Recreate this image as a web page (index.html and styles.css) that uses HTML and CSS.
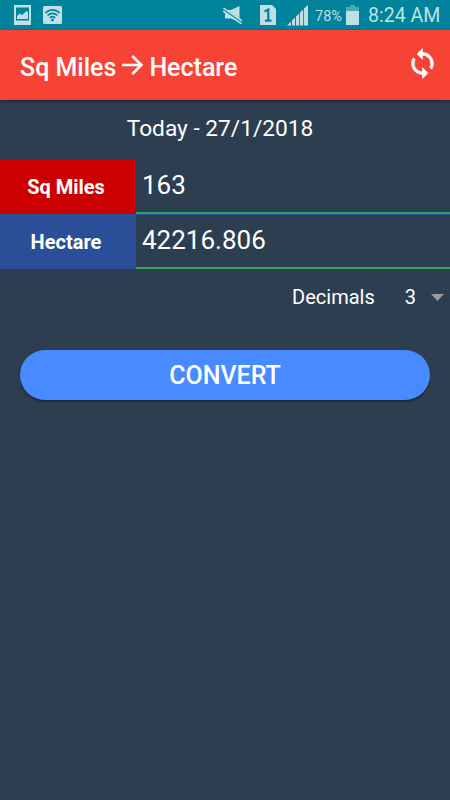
FILE: index.html
```
<!DOCTYPE html>
<html lang="en">
<head>
    <meta charset="UTF-8">
    <meta name="viewport" content="width=device-width, initial-scale=1.0">
    <title>Sq Miles to Hectare</title>
    <link rel="stylesheet" href="styles.css">
</head>
<body>
    <div class="status-bar">
        <svg class="icon-picture" width="17" height="20" viewBox="0 0 17 20">
            <path fill-rule="evenodd" d="M0 0h17v20H0zM2 2.500v13h13v-13z"/>
            <path d="M3 14V11l3-2.500 2 1.500 3-2.500 1-1.500 2 1V14z"/>
        </svg>
        <svg class="icon-wifi" width="19" height="18" viewBox="0 0 19 18">
            <rect width="19" height="18" rx="1.500"/>
            <g class="waves">
                <path d="M2.200 6.800Q9.500 1 16.800 6.800"/>
                <path d="M4.500 9.400Q9.500 5.200 14.500 9.400"/>
                <path d="M6.800 11.800Q9.500 9.400 12.200 11.800"/>
            </g>
            <circle class="dot" cx="9.500" cy="14" r="1.400"/>
        </svg>
        <svg class="icon-mute" width="20" height="18" viewBox="0 0 20 18">
            <path d="M2 4h6L16.500 0v16L8 12.500H2z"/>
            <path class="gap" d="M0 3.200l19 13"/>
            <path class="slash" d="M.5 2.200l18.500 12.700M0 5l18.500 12.700"/>
        </svg>
        <svg class="icon-sim" width="16" height="20" viewBox="0 0 16 20">
            <path d="M0 0h12l4 4v16H0z"/>
            <path class="digit" d="M4.500 6.500L8.300 4.500V16M5 15.600h6.500"/>
        </svg>
        <svg class="icon-signal" width="21" height="21" viewBox="0 0 21 21">
            <path d="M0 20.500L4 16.500v4zM5 15.500l3-3v8H5zM9 11.500l3.200-3v12H9zM13 7.500l3.200-3v16H13zM17 3.500l4-3.500v20.500h-4z"/>
        </svg>
        <span class="battery-text">78%</span>
        <svg class="icon-battery" width="13" height="20" viewBox="0 0 13 20">
            <path class="empty" d="M4 0h5v2h4v4H0V2h4z"/>
            <path d="M0 6h13v14H0z"/>
        </svg>
        <span class="clock">8:24 AM</span>
    </div>

    <header class="app-bar">
        <h1>
            <span class="from">Sq Miles</span>
            <svg class="arrow" width="21" height="20" viewBox="0 0 21 20">
                <path d="M0 10h19.500M10.300 1l9 9-9 9"/>
            </svg>
            <span class="to">Hectare</span>
        </h1>
        <svg class="swap" width="23" height="31" viewBox="3.700 .700 16.600 22.600">
            <path d="M12 4V1L8 5l4 4V6c3.310 0 6 2.690 6 6 0 1.010-.250 1.970-.700 2.800l1.460 1.460C19.540 15.030 20 13.570 20 12c0-4.420-3.580-8-8-8zm0 14c-3.310 0-6-2.690-6-6 0-1.010.250-1.970.700-2.800L5.240 7.740C4.460 8.970 4 10.430 4 12c0 4.420 3.580 8 8 8v3l4-4-4-4v3z"/>
        </svg>
    </header>

    <main>
        <div class="date">Today - 27/1/2018</div>
        <div class="row row-from">
            <div class="label">Sq Miles</div>
            <div class="value">163</div>
        </div>
        <div class="row row-to">
            <div class="label">Hectare</div>
            <div class="value">42216.806</div>
        </div>
        <div class="decimals">
            <span class="decimals-label">Decimals</span>
            <span class="decimals-value">3</span>
            <svg class="caret" width="13" height="7" viewBox="0 0 13 7">
                <path d="M0 0h13L6.500 7z"/>
            </svg>
        </div>
        <button class="convert">CONVERT</button>
    </main>
</body>
</html>
```
FILE: styles.css
```
* {
    box-sizing: border-box;
}

body {
    margin: 0;
    min-height: 100vh;
    background: #2d3e50;
    color: #fff;
    font-family: Roboto, sans-serif;
}

/* Status bar */
.status-bar {
    display: flex;
    align-items: center;
    height: 30px;
    padding-left: 14px;
    background: #00839b;
    color: #bfe0e6;
    white-space: nowrap;
}

.status-bar svg {
    flex: none;
    fill: #bfe0e6;
}

.icon-wifi {
    margin-left: 12px;
}

.icon-wifi .waves {
    fill: none;
    stroke: #00839b;
    stroke-width: 1.6;
}

.status-bar .icon-wifi .dot {
    fill: #00839b;
}

.icon-mute {
    margin-left: 161px;
}

.icon-mute .gap {
    stroke: #00839b;
    stroke-width: 3.6;
}

.icon-mute .slash {
    stroke: #bfe0e6;
    stroke-width: 1.6;
}

.icon-sim {
    margin-left: 17px;
}

.icon-sim .digit {
    fill: none;
    stroke: #00839b;
    stroke-width: 2.2;
}

.icon-signal {
    margin-left: 11px;
}

.battery-text {
    width: 27px;
    margin: 2px 0 0 7px;
    font-size: 14.5px;
}

.icon-battery {
    margin-left: 4px;
}

.icon-battery .empty {
    opacity: 0.4;
}

.clock {
    margin: 1px 0 0 9px;
    font-size: 19.5px;
}

/* Title bar */
.app-bar {
    display: flex;
    align-items: center;
    justify-content: space-between;
    height: 70px;
    padding: 0 16px 0 20px;
    background: #f64336;
    box-shadow: 0 1px 3px rgba(0, 0, 0, 0.5);
}

h1 {
    display: flex;
    align-items: center;
    margin: 6px 0 0;
    font-size: 25px;
    font-weight: 500;
    line-height: 30px;
    white-space: nowrap;
}

.arrow {
    margin: 0 6px 7px;
    fill: none;
    stroke: #fff;
    stroke-width: 2.6;
}

.swap {
    margin-bottom: 4px;
    fill: #fff;
    stroke: #fff;
    stroke-width: 0.4;
}

/* Converter */
.date {
    height: 59px;
    padding-right: 10px;
    font-size: 22.7px;
    line-height: 58px;
    text-align: center;
}

.row {
    display: flex;
    height: 55px;
}

.row-from {
    background: linear-gradient(#cc0000 1px, transparent 1px);
}

.row-to {
    background: linear-gradient(#2a4f98 1px, transparent 1px);
}

.label {
    width: 136px;
    padding-right: 4px;
    font-size: 20px;
    font-weight: 700;
    line-height: 56px;
    text-align: center;
}

.row-from .label {
    background: #cc0000;
}

.row-to .label {
    background: #2a4f98;
}

.value {
    flex: 1;
    padding-left: 6px;
    border-bottom: 2px solid #2ba85c;
    font-size: 26px;
    line-height: 53px;
}

.decimals {
    display: flex;
    align-items: center;
    justify-content: flex-end;
    height: 56px;
    padding-right: 6px;
    font-size: 20px;
}

.decimals-value {
    margin-left: 30px;
}

.caret {
    margin-left: 15px;
    fill: #999;
}

.convert {
    display: block;
    width: 410px;
    height: 50px;
    margin: 25px auto 0;
    padding: 1px 0 0;
    border: none;
    border-radius: 25px;
    background: #488aff;
    box-shadow: 0 2px 2px rgba(0, 0, 0, 0.35);
    color: #fff;
    font-family: inherit;
    font-size: 25px;
    font-weight: 500;
    cursor: pointer;
}
```
